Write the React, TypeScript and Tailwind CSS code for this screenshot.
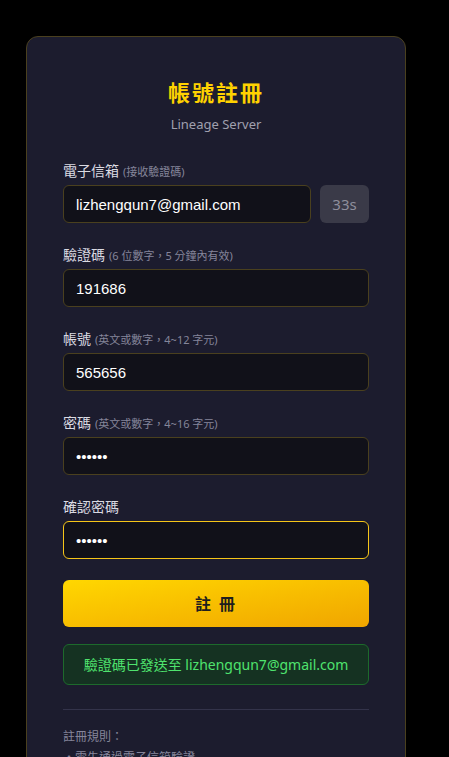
import { useState } from "react";

const sans = { fontFamily: '"Noto Sans", "Noto Sans CJK TC", sans-serif' };
const latin = {
  fontFamily: '"Liberation Sans", Arial, "Noto Sans CJK TC", sans-serif',
};

type FieldProps = {
  label: string;
  hint?: string;
  type?: string;
  value: string;
  onChange: (v: string) => void;
  focused?: boolean;
  children?: React.ReactNode;
};

const Field = ({ label, hint, type = "text", value, onChange, focused, children }: FieldProps) => (
  <div>
    <label className="mb-1 flex h-[20px] items-baseline gap-1 text-[14px] leading-[20px] text-[#dadae2]">
      {label}
      {hint && <span className="text-[11px] text-[#85859a]">{hint}</span>}
    </label>
    <div className="flex gap-[9px]">
      <input
        type={type}
        value={value}
        onChange={(e) => onChange(e.target.value)}
        style={latin}
        className={`h-[38px] min-w-0 flex-1 rounded-md border bg-[#111119] px-3 text-[15px] text-white outline-none ${
          focused ? "border-[#f5c518]" : "border-[#4a401e]"
        }`}
      />
      {children}
    </div>
  </div>
);

export default function App() {
  const [email, setEmail] = useState("lizhengqun7@gmail.com");
  const [code, setCode] = useState("191686");
  const [account, setAccount] = useState("565656");
  const [password, setPassword] = useState("123456");
  const [confirm, setConfirm] = useState("123456");

  return (
    <div className="min-h-screen bg-black pl-[26px] pt-[36px]" style={sans}>
      <div className="w-[380px] rounded-xl border border-[#4a401e] bg-[#1c1c2e] px-[36px] pb-10 pt-10">
        <h1 className="text-center text-[22px] font-bold leading-[30px] tracking-[2px] text-[#ffd200]">
          帳號註冊
        </h1>
        <p className="mt-2 text-center text-[13px] leading-[18px] text-[#a0a0ae]">
          Lineage Server
        </p>

        <form className="mt-[28px] flex flex-col gap-[22px]" onSubmit={(e) => e.preventDefault()}>
          <Field label="電子信箱" hint="(接收驗證碼)" value={email} onChange={setEmail}>
            <button
              type="button"
              disabled
              className="h-[38px] w-[49px] rounded-md bg-[#3a3a48] text-[15px] text-[#8e8e9c]"
            >
              33s
            </button>
          </Field>
          <Field label="驗證碼" hint="(6 位數字，5 分鐘內有效)" value={code} onChange={setCode} />
          <Field label="帳號" hint="(英文或數字，4~12 字元)" value={account} onChange={setAccount} />
          <Field
            label="密碼"
            hint="(英文或數字，4~16 字元)"
            type="password"
            value={password}
            onChange={setPassword}
          />
          <Field label="確認密碼" type="password" value={confirm} onChange={setConfirm} focused />
        </form>

        <button
          type="submit"
          className="mt-[21px] h-[47px] w-full rounded-md bg-linear-to-br from-[#ffd700] to-[#f0a500] text-[16px] font-bold tracking-[2px] text-[#1e1e1e]"
        >
          註 冊
        </button>

        <div className="mt-[17px] flex h-[41px] items-center justify-center rounded-md border border-[#1d6a2c] bg-[#153222] text-[14px] text-[#4fe36e]">
          驗證碼已發送至 lizhengqun7@gmail.com
        </div>

        <div className="mt-[24px] h-px bg-[#33334a]" />

        <div className="mt-[18px] text-[12px] leading-[18px] text-[#85859a]">
          <p>註冊規則：</p>
          <ul className="mt-[3px] space-y-1">
            <li>・需先通過電子信箱驗證</li>
            <li>・帳號與密碼僅限英文或數字</li>
            <li>・每個電子信箱僅能註冊一個帳號</li>
          </ul>
        </div>
      </div>
    </div>
  );
}
